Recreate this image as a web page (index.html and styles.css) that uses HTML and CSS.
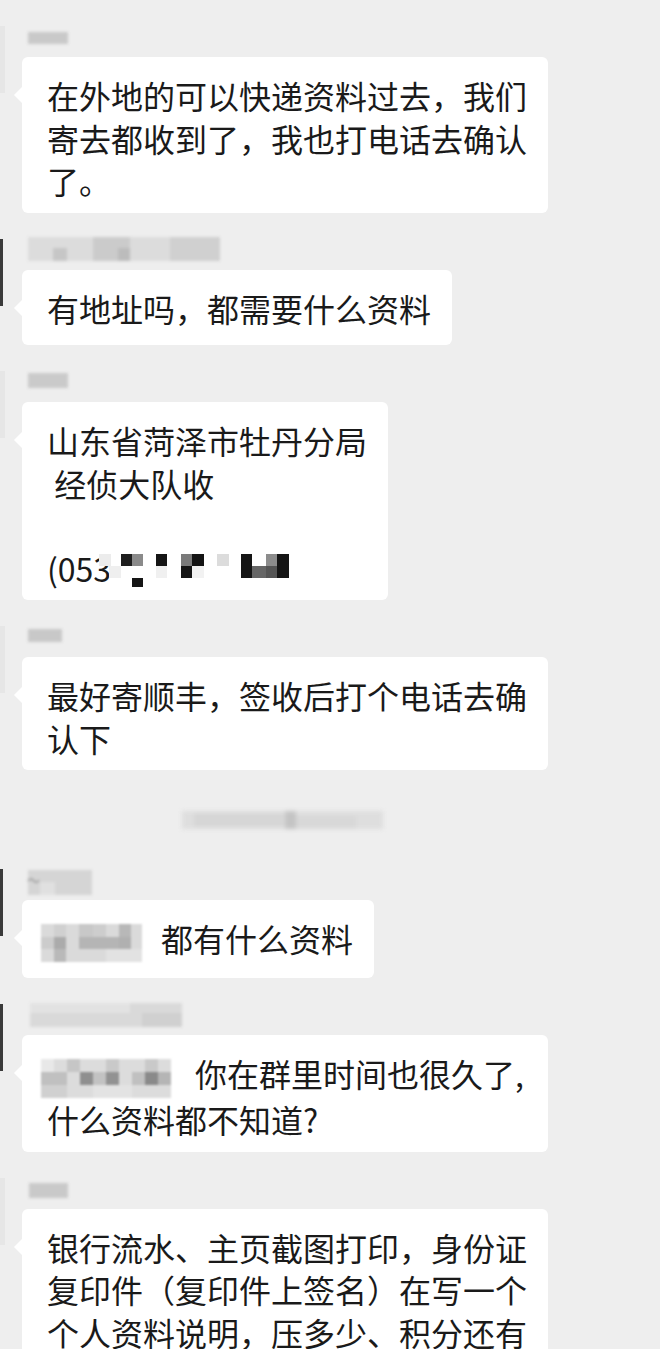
FILE: index.html
```html
<!DOCTYPE html>
<html lang="zh-CN">
<head>
<meta charset="utf-8">
<title>聊天记录</title>
<link rel="stylesheet" href="styles.css">
</head>
<body>
<div class="chat">

  <div class="msg">
    <div class="avatar"></div>
    <div class="msg-body">
      <svg class="name" width="70" height="36"><rect x="6" y="11" width="40" height="12" fill="#c9c9c9"/></svg>
      <div class="bubble">在外地的可以快递资料过去，我们寄去都收到了，我也打电话去确认了。</div>
    </div>
  </div>

  <div class="msg">
    <div class="avatar avatar-dark"></div>
    <div class="msg-body">
      <svg class="name" width="210" height="36">
        <rect x="6" y="3" width="192" height="24" fill="#dcdcdc"/>
        <rect x="31" y="14" width="14" height="13" fill="#c6c6c6"/>
        <rect x="71" y="3" width="37" height="24" fill="#cbcbcb"/>
        <rect x="96" y="14" width="12" height="13" fill="#bcbcbc"/>
        <rect x="148" y="3" width="50" height="24" fill="#d0d0d0"/>
      </svg>
      <div class="bubble bubble-single">有地址吗，都需要什么资料</div>
    </div>
  </div>

  <div class="msg">
    <div class="avatar"></div>
    <div class="msg-body">
      <svg class="name" width="70" height="36"><rect x="6" y="7" width="40" height="15" fill="#cacaca"/></svg>
      <div class="bubble">山东省菏泽市牡丹分局<br>&nbsp;经侦大队收<br><br>(053<svg class="phone-mosaic" width="192" height="33">
          <rect x="0" y="0" width="12" height="12" fill="#ececec"/>
          <rect x="22" y="0" width="11" height="12" fill="#1e1e1e"/>
          <rect x="33" y="0" width="11" height="12" fill="#8a8a8a"/>
          <rect x="57" y="0" width="11" height="12" fill="#151515"/>
          <rect x="82" y="0" width="11" height="12" fill="#7a7a7a"/>
          <rect x="93" y="0" width="12" height="12" fill="#141414"/>
          <rect x="118" y="0" width="12" height="12" fill="#dcdcdc"/>
          <rect x="142" y="0" width="11" height="12" fill="#151515"/>
          <rect x="167" y="0" width="11" height="12" fill="#8c8c8c"/>
          <rect x="178" y="0" width="12" height="12" fill="#151515"/>
          <rect x="10" y="12" width="12" height="12" fill="#efefef"/>
          <rect x="57" y="12" width="11" height="12" fill="#f0f0f0"/>
          <rect x="82" y="12" width="11" height="12" fill="#151515"/>
          <rect x="93" y="12" width="12" height="12" fill="#f2f2f2"/>
          <rect x="142" y="12" width="11" height="12" fill="#151515"/>
          <rect x="153" y="12" width="14" height="12" fill="#666666"/>
          <rect x="167" y="12" width="11" height="12" fill="#555555"/>
          <rect x="178" y="12" width="12" height="12" fill="#151515"/>
          <rect x="33" y="24" width="11" height="9" fill="#151515"/>
        </svg></div>
    </div>
  </div>

  <div class="msg">
    <div class="avatar"></div>
    <div class="msg-body">
      <svg class="name" width="70" height="36"><rect x="6" y="8" width="34" height="13" fill="#c8c8c8"/></svg>
      <div class="bubble">最好寄顺丰，签收后打个电话去确认下</div>
    </div>
  </div>

  <div class="time">
    <svg class="time-mosaic" width="201" height="24">
      <rect x="0" y="3" width="201" height="18" fill="#dedede"/>
      <rect x="12" y="5" width="90" height="14" fill="#d6d6d6"/>
      <rect x="103" y="3" width="11" height="18" fill="#c4c4c4"/>
      <rect x="114" y="8" width="60" height="13" fill="#d8d8d8"/>
    </svg>
  </div>

  <div class="msg">
    <div class="avatar avatar-dark"></div>
    <div class="msg-body">
      <svg class="name" width="100" height="36">
        <rect x="6" y="6" width="64" height="25" fill="#d5d5d5"/>
        <rect x="18" y="18" width="15" height="13" fill="#e0e0e0"/>
        <path d="M6 17 q3 -4 6 0 q3 3 5 -1" stroke="#9a9a9a" stroke-width="1.5" fill="none"/>
      </svg>
      <div class="bubble bubble-single"><svg class="mention mention-short" width="101" height="38">
          <rect x="0" y="0" width="101" height="38" fill="#dadada"/>
          <rect x="13" y="0" width="12" height="13" fill="#d0d0d0"/>
          <rect x="38" y="0" width="14" height="13" fill="#c8c8c8"/>
          <rect x="52" y="0" width="13" height="13" fill="#cdcdcd"/>
          <rect x="78" y="0" width="12" height="13" fill="#b8b8b8"/>
          <rect x="0" y="13" width="13" height="12" fill="#cccccc"/>
          <rect x="13" y="13" width="12" height="12" fill="#ababab"/>
          <rect x="38" y="13" width="40" height="12" fill="#b5b5b5"/>
          <rect x="78" y="13" width="12" height="12" fill="#b0b0b0"/>
          <rect x="13" y="25" width="12" height="13" fill="#b9b9b9"/>
          <rect x="65" y="25" width="36" height="13" fill="#e2e2e2"/>
        </svg>都有什么资料</div>
    </div>
  </div>

  <div class="msg">
    <div class="avatar avatar-dark"></div>
    <div class="msg-body">
      <svg class="name" width="190" height="36">
        <rect x="8" y="4" width="152" height="24" fill="#d9d9d9"/>
        <rect x="8" y="4" width="100" height="10" fill="#e2e2e2"/>
        <rect x="120" y="14" width="40" height="14" fill="#d0d0d0"/>
      </svg>
      <div class="bubble"><svg class="mention mention-long" width="130" height="39">
          <rect x="0" y="0" width="130" height="39" fill="#dcdcdc"/>
          <rect x="0" y="0" width="13" height="13" fill="#e8e8e8"/>
          <rect x="26" y="0" width="13" height="13" fill="#c6c6c6"/>
          <rect x="65" y="0" width="13" height="13" fill="#c9c9c9"/>
          <rect x="104" y="0" width="13" height="13" fill="#c9c9c9"/>
          <rect x="0" y="13" width="26" height="13" fill="#c0c0c0"/>
          <rect x="39" y="13" width="13" height="13" fill="#8f8f8f"/>
          <rect x="52" y="13" width="13" height="13" fill="#c2c2c2"/>
          <rect x="65" y="13" width="13" height="13" fill="#929292"/>
          <rect x="91" y="13" width="13" height="13" fill="#c0c0c0"/>
          <rect x="104" y="13" width="13" height="13" fill="#8a8a8a"/>
          <rect x="117" y="13" width="13" height="13" fill="#b5b5b5"/>
          <rect x="0" y="26" width="26" height="13" fill="#d0d0d0"/>
          <rect x="52" y="26" width="39" height="13" fill="#e3e3e3"/>
        </svg>你在群里时间也很久了,什么资料都不知道?</div>
    </div>
  </div>

  <div class="msg">
    <div class="avatar"></div>
    <div class="msg-body">
      <svg class="name" width="70" height="36"><rect x="7" y="10" width="39" height="15" fill="#c9c9c9"/></svg>
      <div class="bubble">银行流水、主页截图打印，身份证复印件（复印件上签名）在写一个个人资料说明，压多少、积分还有多少，什么时候开始做的</div>
    </div>
  </div>

</div>
</body>
</html>
```

FILE: styles.css
```css
html, body {
  margin: 0;
  padding: 0;
  background: #eeeeee;
}

body {
  font-family: "Noto Sans CJK SC", "Noto Sans", sans-serif;
  color: #1a1a1a;
  overflow: hidden;
  height: 1349px;
}

.chat {
  display: flex;
  flex-direction: column;
  gap: 21px;
  padding-top: 21px;
}

.msg {
  display: flex;
  align-items: flex-start;
}

.avatar {
  flex: none;
  width: 5px;
  height: 67px;
  margin-top: 5px;
  background: #e6e6e6;
}

.avatar-dark {
  width: 3px;
  background: #3a3a3a;
  margin-right: 2px;
}

.msg-body {
  margin-left: 17px;
  display: flex;
  flex-direction: column;
  align-items: flex-start;
}

.name {
  display: block;
  filter: blur(1.4px);
}

.bubble {
  position: relative;
  background: #ffffff;
  border-radius: 6px;
  padding: 17px 21px 11px 25px;
  max-width: 480px;
  font-size: 32px;
  line-height: 42.5px;
  word-break: break-all;
}

.bubble::before {
  content: "";
  position: absolute;
  left: -8px;
  top: 30px;
  border-style: solid;
  border-width: 8px 8px 8px 0;
  border-color: transparent #ffffff transparent transparent;
}

.bubble-single {
  padding-bottom: 16px;
}

.phone-mosaic {
  vertical-align: -5px;
  margin-left: -12px;
}

.mention {
  vertical-align: middle;
  filter: blur(0.8px);
  margin-left: -6px;
}

.mention-short {
  margin-right: 19px;
}

.mention-long {
  margin-right: 24px;
}

.time {
  margin-top: 17px;
  margin-bottom: 11px;
  padding-left: 182px;
  height: 24px;
}

.time-mosaic {
  display: block;
  filter: blur(2px);
}
```
